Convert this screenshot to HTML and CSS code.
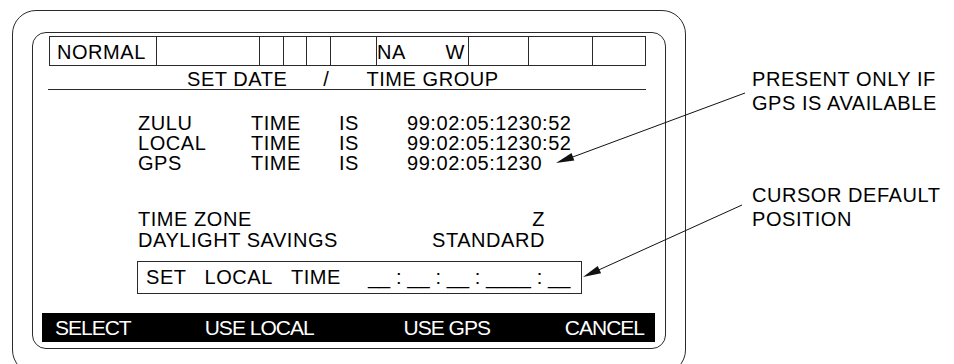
FILE: index.html
```html
<!DOCTYPE html>
<html>
<head>
<meta charset="utf-8">
<link rel="stylesheet" href="styles.css">
</head>
<body>
<div class="page">
  <div class="device">
    <div class="screen">
      <div class="status">
        <div class="cell normal">NORMAL</div>
        <div class="cell"></div>
        <div class="cell"></div>
        <div class="cell"></div>
        <div class="cell"></div>
        <div class="cell"></div>
        <div class="cell na"><span>NA</span><span>W</span></div>
        <div class="cell"></div>
        <div class="cell"></div>
        <div class="cell"></div>
      </div>
      <div class="title"><span class="t-date">SET DATE</span><span class="t-slash">/</span><span class="t-group">TIME GROUP</span></div>
      <div class="times">
        <span>ZULU</span><span>TIME</span><span>IS</span><span>99:02:05:1230:52</span>
        <span>LOCAL</span><span>TIME</span><span>IS</span><span>99:02:05:1230:52</span>
        <span>GPS</span><span>TIME</span><span>IS</span><span>99:02:05:1230</span>
      </div>
      <div class="settings">
        <div class="setting"><span>TIME ZONE</span><span>Z</span></div>
        <div class="setting"><span>DAYLIGHT SAVINGS</span><span>STANDARD</span></div>
      </div>
      <div class="entry"><span class="e-set">SET</span><span class="e-local">LOCAL</span><span class="e-time">TIME</span><span class="e-blanks">__ : __ : __ : ____ : __</span></div>
      <div class="softkeys"><span>SELECT</span><span class="k-local">USE LOCAL</span><span class="k-gps">USE GPS</span><span class="k-cancel">CANCEL</span></div>
    </div>
  </div>
  <div class="notes">
    <div class="note note-gps">PRESENT ONLY IF<br>GPS IS AVAILABLE</div>
    <div class="note note-cursor">CURSOR DEFAULT<br>POSITION</div>
  </div>
  <svg class="arrows" width="954" height="364" viewBox="0 0 954 364">
    <line x1="745" y1="93" x2="566" y2="159.5" stroke="#111" stroke-width="1"/>
    <polygon points="556,163 574.3,160.5 571.5,153" fill="#111"/>
    <line x1="742" y1="205" x2="592" y2="273" stroke="#111" stroke-width="1"/>
    <polygon points="583,277 601.1,273.2 597.7,265.9" fill="#111"/>
  </svg>
</div>
</body>
</html>
```

FILE: styles.css
```css
html, body {
  margin: 0;
  padding: 0;
  background: #fff;
  overflow: hidden;
}

body {
  width: 954px;
  height: 364px;
  font-family: "Liberation Sans", Arial, sans-serif;
  font-size: 20px;
  letter-spacing: 0.55px;
  color: #000;
}

.page {
  position: relative;
  display: flex;
  align-items: flex-start;
  width: 954px;
  height: 364px;
}

.device {
  box-sizing: border-box;
  margin: 10px 0 0 12px;
  width: 674px;
  height: 364px;
  border: 1px solid #2a2a2a;
  border-radius: 24px;
  padding: 21px 19px 0 19px;
  flex: none;
}

.screen {
  box-sizing: border-box;
  width: 634px;
  height: 317px;
  border: 1px solid #2a2a2a;
  border-radius: 14px;
  display: flex;
  flex-direction: column;
  align-items: flex-start;
}

.status {
  margin: 3px 0 0 16px;
  display: grid;
  grid-template-columns: 107px 103px 24px 23px 24px 46px 92px 60px 64px 53px;
  height: 30px;
  box-sizing: border-box;
  border-top: 1px solid #2a2a2a;
  border-bottom: 1px solid #2a2a2a;
  border-left: 1px solid #2a2a2a;
}

.cell {
  box-sizing: border-box;
  border-right: 1px solid #2a2a2a;
  padding-top: 3px;
  line-height: 25px;
  white-space: nowrap;
}

.normal {
  padding-left: 7px;
}

.na {
  display: flex;
  justify-content: space-between;
  padding-right: 3px;
}

.title {
  margin-left: 15px;
  width: 598px;
  box-sizing: border-box;
  padding: 4px 0 0 139px;
  line-height: 19px;
  border-bottom: 1px solid #2a2a2a;
  display: flex;
  white-space: nowrap;
}

.t-slash {
  margin-left: 36px;
}

.t-group {
  margin-left: 37px;
}

.times {
  margin: 23px 0 0 105px;
  display: grid;
  grid-template-columns: 113px 88px 68px auto;
  line-height: 20px;
  white-space: nowrap;
}

.settings {
  margin: 36px 0 0 105px;
  width: 407px;
  line-height: 21px;
}

.setting {
  display: flex;
  justify-content: space-between;
  white-space: nowrap;
}

.entry {
  margin: 10px 0 0 104px;
  box-sizing: border-box;
  width: 445px;
  height: 33px;
  border: 1px solid #2a2a2a;
  padding-left: 8px;
  line-height: 31px;
  display: flex;
  white-space: pre;
}

.e-local {
  margin-left: 18px;
}

.e-time {
  margin-left: 18px;
}

.e-blanks {
  margin-left: 27px;
  letter-spacing: 0.1px;
}

.softkeys {
  margin: 19px 0 0 9px;
  box-sizing: border-box;
  width: 613px;
  height: 29px;
  background: #000;
  color: #fff;
  font-size: 21px;
  letter-spacing: -1px;
  line-height: 29px;
  padding: 0 11px 0 13px;
  display: flex;
  white-space: nowrap;
}

.k-local {
  margin-left: 74px;
}

.k-gps {
  margin-left: 90px;
}

.k-cancel {
  margin-left: auto;
}

.notes {
  margin-left: 66px;
  padding-top: 67px;
  display: flex;
  flex-direction: column;
  line-height: 24px;
  white-space: nowrap;
}

.note-cursor {
  margin-top: 68px;
}

.arrows {
  position: absolute;
  left: 0;
  top: 0;
  pointer-events: none;
}
```
